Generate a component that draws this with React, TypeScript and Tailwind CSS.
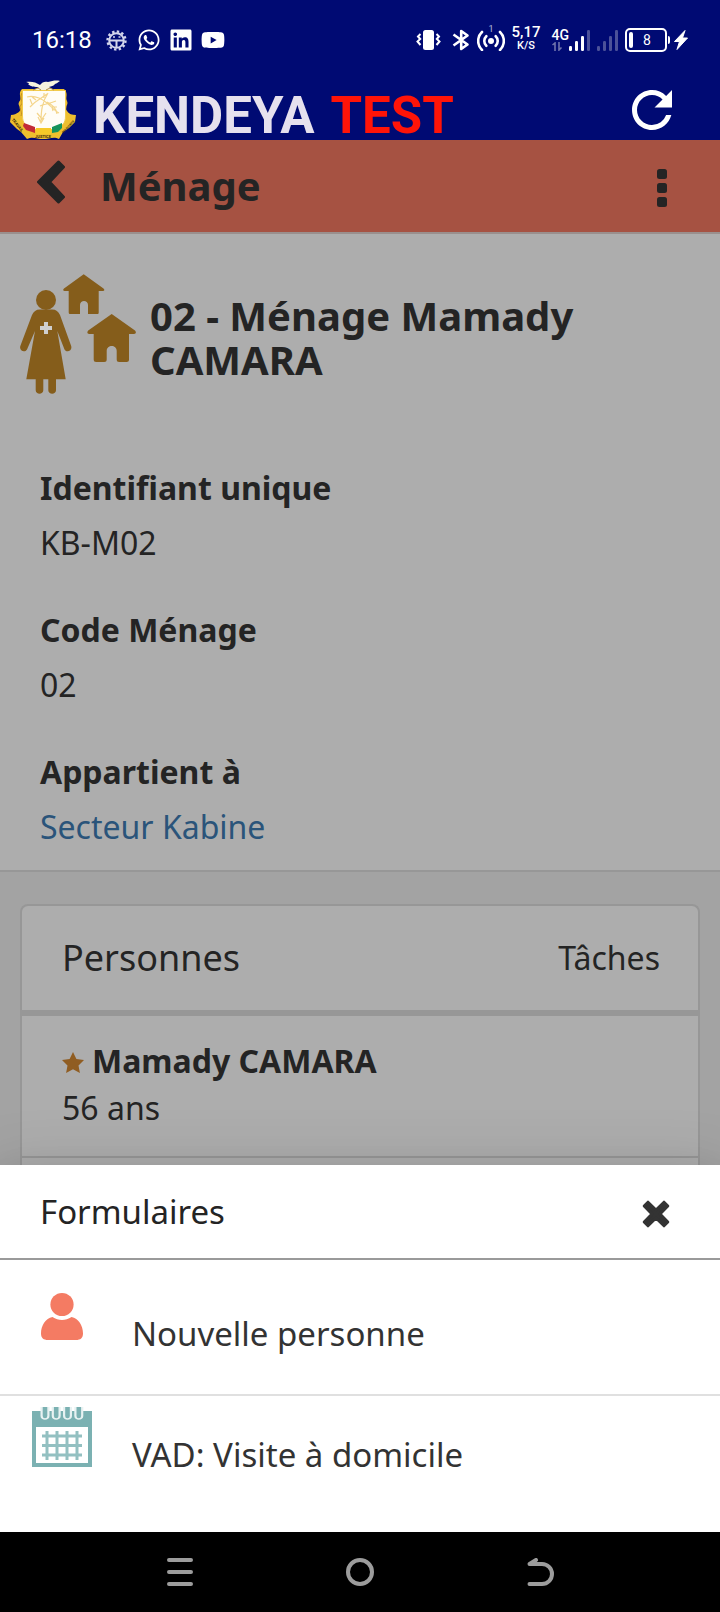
import type { ReactNode } from 'react';
import { FaLinkedin, FaWhatsapp, FaYoutube } from 'react-icons/fa';
import { MdRefresh } from 'react-icons/md';

function GearIcon() {
  return (
    <svg width="21" height="21" viewBox="0 0 21 21" fill="none" stroke="#d3d5ec" aria-hidden="true">
      <circle cx="10.500" cy="10.500" r="9" strokeWidth="2.400" strokeDasharray="2.400 2.312" />
      <circle cx="10.500" cy="10.500" r="7.300" strokeWidth="2" />
      <path d="M4 10.500h13M10.500 10.500v7" strokeWidth="2" />
      <path d="M7 7h2M12.500 7h2" strokeWidth="1.600" />
    </svg>
  );
}

function VibrateIcon() {
  return (
    <svg width="25" height="22" viewBox="0 0 25 22" fill="none" stroke="white" strokeWidth="2" aria-hidden="true">
      <rect x="7" y="1" width="11" height="20" rx="2.500" fill="white" stroke="none" />
      <path d="M4.500 5 2 7.500 4.200 10 1.500 12.500 4.500 16M20.500 5 23 7.500 20.800 10 23.500 12.500 20.500 16" />
    </svg>
  );
}

function BluetoothIcon() {
  return (
    <svg width="18" height="22" viewBox="0 0 18 22" fill="none" stroke="white" strokeWidth="2.600" strokeLinejoin="round" aria-hidden="true">
      <path d="M1.500 5.500 15.500 15.500 9.200 20V2l6.300 4.500L1.500 16.500" />
    </svg>
  );
}

function HotspotIcon() {
  return (
    <span className="relative">
      <svg width="28" height="22" viewBox="0 0 28 22" fill="none" stroke="white" strokeWidth="2.600" strokeLinecap="round" aria-hidden="true">
        <circle cx="14" cy="12" r="3" fill="white" stroke="none" />
        <path d="M9.300 7.200a6.700 6.700 0 0 0 0 9.600M18.700 7.200a6.700 6.700 0 0 1 0 9.600M5 3a12.500 12.500 0 0 0 0 18M23 3a12.500 12.500 0 0 1 0 18" />
      </svg>
      <span className="absolute -top-1 left-3 text-[9px] leading-[9px] text-[#b5b8dd]">1</span>
    </span>
  );
}

function SignalBars({ level }: { level: number }) {
  const bars = [
    { x: 0, y: 17, h: 5 },
    { x: 6, y: 12, h: 10 },
    { x: 12, y: 7, h: 15 },
    { x: 18, y: 1, h: 21 },
  ];
  return (
    <svg width="21" height="22" viewBox="0 0 21 22" aria-hidden="true">
      {bars.map((bar, i) => (
        <rect key={bar.x} x={bar.x} y={bar.y} width="3" height={bar.h} rx="1.200" fill={i < level ? 'white' : '#4c5299'} />
      ))}
    </svg>
  );
}

function StatusBar() {
  return (
    <div className="flex h-20 items-center justify-between px-8 text-white">
      <div className="flex items-center gap-2">
        <span className="mr-1.5 text-2xl leading-6">16:18</span>
        <span className="mr-0.5">
          <GearIcon />
        </span>
        <FaWhatsapp size={24} aria-hidden="true" />
        <FaLinkedin size={24} aria-hidden="true" />
        <FaYoutube size={24} aria-hidden="true" />
      </div>
      <div className="flex items-center gap-[7px]">
        <VibrateIcon />
        <span className="flex pl-1">
          <BluetoothIcon />
        </span>
        <HotspotIcon />
        <span className="flex flex-col items-center pb-1 font-medium">
          <span className="text-[15px] leading-4">5,17</span>
          <span className="text-[11px] leading-3">K/S</span>
        </span>
        <span className="flex pl-1">
          <span className="flex flex-col">
            <span className="text-sm font-medium leading-[13px]">4G</span>
            <svg width="11" height="9" viewBox="0 0 11 9" fill="none" stroke="#6f74ad" strokeWidth="1.600" aria-hidden="true">
              <path d="M0.500 3 3 1v8M7 0v8l2.500-2.500" />
            </svg>
          </span>
          <SignalBars level={3} />
        </span>
        <SignalBars level={0} />
        <span className="flex items-center gap-1">
          <span className="flex items-center gap-px">
            <span className="flex h-6 w-[42px] items-center rounded-[5px] border-2 border-white pl-0.5">
              <span className="h-4 w-1 rounded-full bg-white" />
              <span className="flex-1 pr-1 text-center text-sm leading-4">8</span>
            </span>
            <span className="h-2 w-0.5 rounded-r bg-white" />
          </span>
          <svg width="14" height="20" viewBox="0 0 14 20" fill="white" stroke="white" strokeLinejoin="round" aria-hidden="true">
            <path d="M11 0.500 0.500 11.500h5L3 19.500 13.500 8H8.500z" />
          </svg>
        </span>
      </div>
    </div>
  );
}

function Emblem() {
  return (
    <svg width="66" height="60" viewBox="0 0 66 60" role="img" aria-label="Armoiries de Guinée">
      <path
        d="M12 9C7 14 13 18 9 22c-2 4 4 6 0 10-3 2-5 3-8 3l-1 7 7 7 4 3 6 7c6-3 10 0 16 0s11-3 16 0l4-7 6-4 6-6 1-7c-4 0-7-1-9-4-3-4 2-6 0-10s2-7-3-12z"
        fill="#eebf2e"
      />
      <path d="M12 13c-3 6 2 8-1 12s2 6 0 11M54 13c3 6-2 8 1 12s-2 6 0 11" fill="none" stroke="#c58f22" strokeWidth="1" />
      <path d="M12.500 10.500h43V36c0 7-3 10-9 12l-13 4-12-4c-6-2-9-5-9-12z" fill="#fffdf6" stroke="#f2cb4d" strokeWidth="1" />
      <path
        d="M17 17c8-2 15 2 20 6s8 8 12 10M20 27c6-7 12-9 17-13M38 13c-6 9-7 18-7 30M30 26c4-2 9-2 16-5M37 22c5 3 9 5 10 12M27 33l5 6 4-6M28 37l3 6 3-5M22 24l-2-5M26 20l-4-3M42 27l5 0M43 31l-1-4M34 18l0-5"
        fill="none"
        stroke="#f4d58b"
        strokeWidth="1.200"
      />
      <path d="M14 43l11 4v6l-9-3-3-4z" fill="#c22b36" />
      <path d="M26 48h15v6H26z" fill="#f6c928" />
      <path d="M42 47l10-4v5l-4 4-6 1z" fill="#15935b" />
      <path
        d="M16 2c5-1 10 0 14 3 2-3 5-4 8-3 4-1 8-2 12-1-2 1-2 2-5 3-1 2-4 2-6 3l5 3H24l5-3c-4 0-8 0-11-3 2 0 1-1-2-2z"
        fill="#f7f3df"
      />
      <path d="M23 10l5-2 3 2M36 10l4-2 4 2" fill="none" stroke="#b08d48" strokeWidth="1" />
      <g fill="#3d3006" fontSize="4" fontWeight="700" textAnchor="middle">
        <text transform="translate(6.500 46) rotate(52)">TRAVAIL</text>
        <text x="33" y="58">
          JUSTICE
        </text>
        <text transform="translate(59 47.500) rotate(-47)" fontSize="3">
          SOLIDARITE
        </text>
      </g>
    </svg>
  );
}

function HouseholdIcon() {
  return (
    <svg width="116" height="120" viewBox="0 0 116 120" fill="#855d1b" className="shrink-0" aria-hidden="true">
      <circle cx="26" cy="26" r="10" />
      <path d="M20 35.500h12c4 0 6.500 2 8 5.500l11 30.500c2 5-4 8-6.500 4L37.300 57l8.400 48.300H36v11c0 4.500-7.700 4.500-7.700 0v-11h-5v11c0 4.500-7.600 4.500-7.600 0v-11H6.300L15 57 7 75.500c-2.500 4-8.500 1-6.500-4L12 41c1.500-3.500 4-5.500 8-5.500z" />
      <path d="M24 48h4v4h4v4h-4v4h-4v-4h-4v-4h4z" fill="#cfcfcf" />
      <path d="M63.700.3 83.500 14.500c1.500 1.500.8 2.500-.5 2.500h-4.300v21.500c0 1-.5 1.500-1.500 1.500H68v-9c0-5.300-8-5.300-8 0v9h-9.500c-1.200 0-1.800-.5-1.800-1.500V17h-4c-1.600 0-2-1.500-.7-2.500z" />
      <path d="M91.700 40 115 56.500c1.500 1.500 1 3.500-1 3.500h-5v25.500c0 1.700-.8 2.500-2.500 2.500h-7.300c-1.700 0-2.500-.8-2.500-2.500V77c0-6.600-10-6.600-10 0v8.500c0 1.700-.8 2.500-2.500 2.500h-8c-1.700 0-2.500-.8-2.500-2.500V60h-4.500c-2 0-2.400-2-1-3.500z" />
    </svg>
  );
}

function PersonIcon() {
  return (
    <svg width="60" height="60" viewBox="0 0 60 60" fill="#f47b63" className="shrink-0" aria-hidden="true">
      <circle cx="30" cy="18.500" r="11.600" />
      <path d="M20.500 31c6 4 13 4 19 0 7 1.500 11.500 8.500 11.500 16.500 0 4.500-2.500 6.500-7 6.500H16c-4.500 0-7-2-7-6.500C9 39.500 13.500 32.500 20.500 31z" />
    </svg>
  );
}

function CalendarIcon() {
  return (
    <svg width="60" height="60" viewBox="0 0 60 60" className="shrink-0" aria-hidden="true">
      <path d="M0 4h60v56H0z" fill="#7bb1b2" />
      <path d="M4 20h52v36H4z" fill="white" />
      <path
        d="M8.500 0h9v9c0 5-9 5-9 0zM19.700 0h9v9c0 5-9 5-9 0zM31 0h9v9c0 5-9 5-9 0zM42.300 0h9v9c0 5-9 5-9 0z"
        fill="#e8f2f2"
      />
      <path d="M13 0v9M24.200 0v9M35.500 0v9M46.800 0v9" stroke="#7bb1b2" strokeWidth="4.600" strokeLinecap="round" />
      <path d="M15 24v29M25 24v29M35 24v29M45 24v29M10 29h40M10 38.500h40M10 48h40" stroke="#93c0c1" strokeWidth="3" />
    </svg>
  );
}

const details: { label: string; value: ReactNode }[] = [
  { label: 'Identifiant unique', value: 'KB-M02' },
  { label: 'Code Ménage', value: '02' },
  {
    label: 'Appartient à',
    value: (
      <a href="#secteur" className="text-[#2a547a]">
        Secteur Kabine
      </a>
    ),
  },
];

export default function App() {
  return (
    <div className="flex min-h-screen flex-col bg-[#adadad] font-['Noto_Sans',sans-serif] text-[32px] leading-[44px] text-[#242424]">
      <header>
        <div className="bg-[#000a73] font-[Roboto,sans-serif]">
          <StatusBar />
          <div className="flex h-[60px] items-center pl-2.5 pr-[38px]">
            <Emblem />
            <div className="flex flex-1 gap-4 pl-[17px] pt-3 text-[51px] font-bold leading-[48px]">
              <span className="text-[#e6e1ee]">KENDEYA</span>
              <span className="text-[#ff1408]">TEST</span>
            </div>
            <button type="button" aria-label="Actualiser" className="text-white">
              <MdRefresh size={60} />
            </button>
          </div>
        </div>
        <div className="flex h-[94px] items-center border-b-2 border-[#9a8f8d] bg-[#a65242] pl-9 pr-[52px]">
          <button type="button" aria-label="Retour" className="pb-2">
            <svg width="30" height="44" viewBox="0 0 30 44" fill="#242424" stroke="#242424" strokeWidth="3" strokeLinejoin="round" aria-hidden="true">
              <path d="M2.500 22 22.500 2 27.500 7 13.500 22 27.500 37 22.500 42z" />
            </svg>
          </button>
          <h1 className="flex-1 pl-[34px] text-[40px] font-bold">Ménage</h1>
          <button type="button" aria-label="Plus d'options" className="pt-1">
            <svg width="12" height="38" viewBox="0 0 12 38" fill="#242424" aria-hidden="true">
              <rect x="1" width="10" height="10" rx="2.500" />
              <rect x="1" y="14" width="10" height="10" rx="2.500" />
              <rect x="1" y="28" width="10" height="10" rx="2.500" />
            </svg>
          </button>
        </div>
      </header>

      <main className="flex flex-1 flex-col">
        <section className="border-b-2 border-[#979797] pb-4 pt-10">
          <div className="flex gap-3.5 px-5">
            <HouseholdIcon />
            <h2 className="max-w-[480px] pt-5 text-[40px] font-bold">02 - Ménage Mamady CAMARA</h2>
          </div>
          <dl className="flex flex-col gap-8 px-10 pt-[66px] leading-[55px]">
            {details.map((item) => (
              <div key={item.label}>
                <dt className="font-bold">{item.label}</dt>
                <dd>{item.value}</dd>
              </div>
            ))}
          </dl>
        </section>

        <section className="flex flex-1 flex-col bg-[#a3a3a3] px-5 pt-8">
          <div className="flex flex-1 flex-col rounded-t-lg border-2 border-b-0 border-[#979797] bg-[#adadad]">
            <div className="flex h-[110px] items-center justify-between border-b-6 border-[#979797] pl-10 pr-[38px]">
              <h3 className="text-[36px]">Personnes</h3>
              <span>Tâches</span>
            </div>
            <div className="border-b-2 border-[#979797] pb-[25px] pl-10 pr-[38px] pt-[21px] leading-[47px]">
              <div className="flex items-center gap-2 font-bold">
                <svg width="22" height="26" viewBox="2 -2 22 26" fill="#905d22" aria-hidden="true">
                  <path d="M13 2l3.400 7 7.600 1.100-5.500 5.300 1.400 7.600-6.900-3.700L6.100 23l1.400-7.600L2 10.100 9.600 9z" />
                </svg>
                Mamady CAMARA
              </div>
              <p>56 ans</p>
            </div>
            <div className="min-h-[7px] flex-1" />
          </div>
        </section>
      </main>

      <section
        aria-label="Formulaires"
        className="relative bg-white text-[33px] shadow-[0_16px_20px_-10px_rgba(0,0,0,0.2),0_32px_48px_4px_rgba(0,0,0,0.14),0_12px_60px_10px_rgba(0,0,0,0.12)]"
      >
        <div className="flex h-[95px] items-center justify-between border-b-2 border-[#9a9a9a] pl-10 pr-[50px]">
          <h3>Formulaires</h3>
          <button type="button" aria-label="Fermer" className="pt-1">
            <svg width="28" height="28" viewBox="0 0 28 28" fill="none" stroke="#333333" strokeWidth="3" strokeLinejoin="round" aria-hidden="true">
              <path
                d="M6 2.200 14 10l8-7.800L25.800 6 18 14l7.800 8-3.800 3.800L14 18l-8 7.800L2.200 22 10 14 2.200 6z"
                fill="#333333"
              />
            </svg>
          </button>
        </div>
        <ul className="text-[#333333]">
          <li className="border-b-2 border-[#e0e0e0]">
            <button type="button" className="flex w-full items-baseline gap-10 px-8 pb-[38px] pt-[26px] text-left">
              <PersonIcon />
              <span>Nouvelle personne</span>
            </button>
          </li>
          <li>
            <button type="button" className="flex w-full items-baseline gap-10 px-8 pb-[55px] pt-[11px] text-left">
              <CalendarIcon />
              <span>VAD: Visite à domicile</span>
            </button>
          </li>
        </ul>
      </section>

      <nav aria-label="Navigation système" className="relative grid h-20 grid-cols-3 place-items-center bg-black px-[12.5%]">
        <button type="button" aria-label="Applications récentes">
          <svg width="26" height="28" viewBox="0 0 26 28" stroke="#9c9c9c" strokeWidth="4" strokeLinecap="round" aria-hidden="true">
            <path d="M2 2h22M2 14h22M2 26h22" />
          </svg>
        </button>
        <button type="button" aria-label="Accueil">
          <svg width="28" height="28" viewBox="0 0 28 28" fill="none" stroke="#9c9c9c" strokeWidth="4" aria-hidden="true">
            <circle cx="14" cy="14" r="12" />
          </svg>
        </button>
        <button type="button" aria-label="Précédent">
          <svg width="28" height="28" viewBox="0 0 28 28" fill="none" stroke="#9c9c9c" strokeWidth="4" strokeLinecap="round" strokeLinejoin="round" aria-hidden="true">
            <path d="M3.500 26H16a10 10 0 0 0 0-20H3.500L10 2" />
          </svg>
        </button>
      </nav>
    </div>
  );
}
